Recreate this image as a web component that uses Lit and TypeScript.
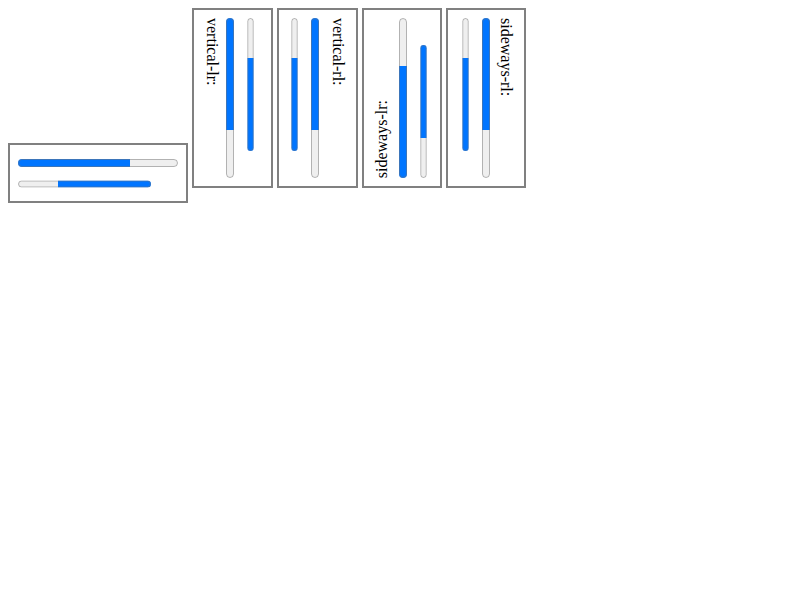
import { LitElement, html, css } from "lit";
import { customElement } from "lit/decorators.js";

const MODES = ["vertical-lr", "vertical-rl", "sideways-lr", "sideways-rl"];

@customElement("app-root")
export class AppRoot extends LitElement {
  static styles = css`
    :host {
      display: block;
      padding: 8px;
      font: 16px/20px "Liberation Serif", serif;
      color: #000;
    }
    .box {
      display: inline-block;
      border: 2px solid gray;
      padding: 8px;
    }
    .vertical-lr { writing-mode: vertical-lr; }
    .vertical-rl { writing-mode: vertical-rl; }
    .sideways-lr { writing-mode: sideways-lr; }
    .sideways-rl { writing-mode: sideways-rl; }
    .small { font-size: smaller; }
  `;

  private bars(name: string) {
    return html`<progress value="70" max="100" aria-label="${name}"></progress><br />
      <progress class="small" dir="rtl" value="70" max="100" aria-label="${name}, right to left"></progress>`;
  }

  render() {
    return html`
      <div class="box horizontal">${this.bars("horizontal")}</div>
      ${MODES.map(
        (mode) => html`<div class="box ${mode}">${mode}:<br />${this.bars(mode)}</div> `
      )}
    `;
  }
}
